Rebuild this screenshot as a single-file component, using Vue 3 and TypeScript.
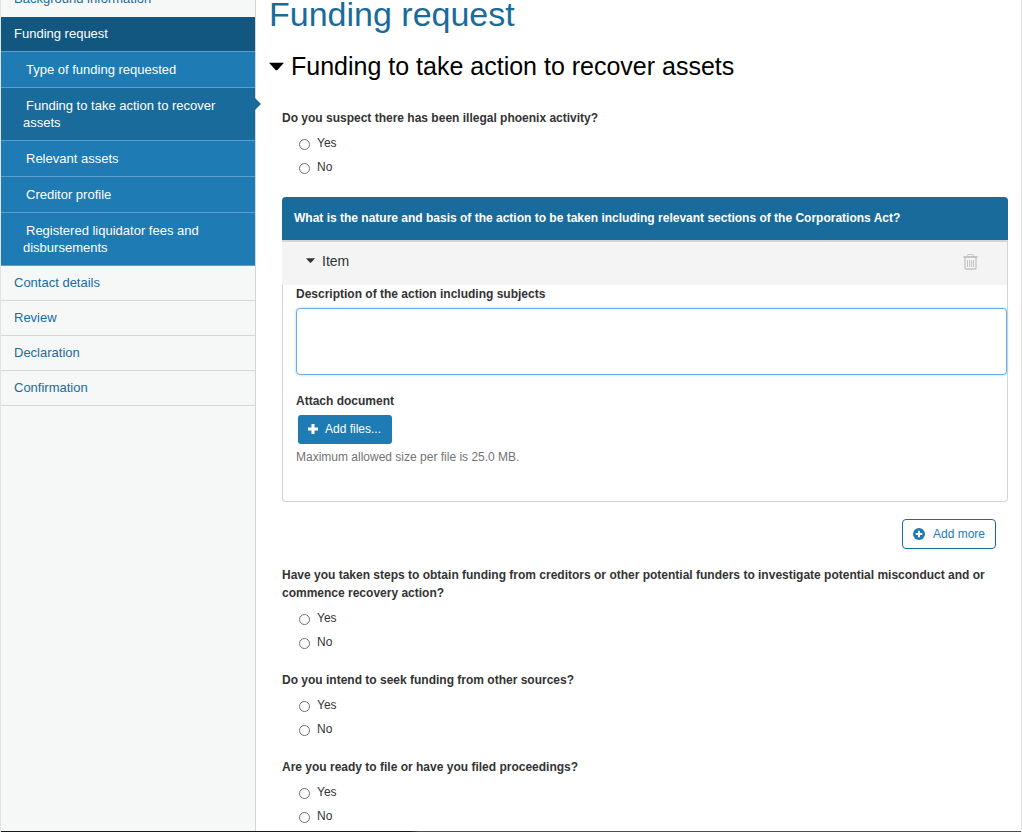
<script setup lang="ts">
import { ref } from 'vue'

interface Step {
  label: string
  kind: 'main' | 'open' | 'sub' | 'active'
}

interface Question {
  id: string
  text: string
}

const steps: Step[] = [
  { label: 'Background information', kind: 'main' },
  { label: 'Funding request', kind: 'open' },
  { label: 'Type of funding requested', kind: 'sub' },
  { label: 'Funding to take action to recover assets', kind: 'active' },
  { label: 'Relevant assets', kind: 'sub' },
  { label: 'Creditor profile', kind: 'sub' },
  { label: 'Registered liquidator fees and disbursements', kind: 'sub' },
  { label: 'Contact details', kind: 'main' },
  { label: 'Review', kind: 'main' },
  { label: 'Declaration', kind: 'main' },
  { label: 'Confirmation', kind: 'main' },
]

const phoenix: Question[] = [
  { id: 'phoenix', text: 'Do you suspect there has been illegal phoenix activity?' },
]

const followUps: Question[] = [
  {
    id: 'steps',
    text: 'Have you taken steps to obtain funding from creditors or other potential funders to investigate potential misconduct and or commence recovery action?',
  },
  { id: 'sources', text: 'Do you intend to seek funding from other sources?' },
  { id: 'proceedings', text: 'Are you ready to file or have you filed proceedings?' },
]

const options = ['Yes', 'No']
const answers = ref<Record<string, string>>({})
const description = ref('')
</script>

<template>
  <div class="page">
    <nav class="sidebar">
      <a v-for="s in steps" :key="s.label" href="#" class="step" :class="s.kind">{{ s.label }}</a>
    </nav>

    <main class="content">
      <h1>Funding request</h1>
      <h2>
        <svg class="caret" viewBox="0 0 16 9"><path d="M0 0.5h16L9 8.2q-1 0.8-2 0z" fill="currentColor" /></svg>
        Funding to take action to recover assets
      </h2>

      <div class="form">
        <fieldset v-for="q in phoenix" :key="q.id">
          <legend>{{ q.text }}</legend>
          <label v-for="o in options" :key="o" class="option">
            <input v-model="answers[q.id]" type="radio" :name="q.id" :value="o" />{{ o }}
          </label>
        </fieldset>

        <section class="panel">
          <h3>What is the nature and basis of the action to be taken including relevant sections of the Corporations Act?</h3>
          <div class="item-bar">
            <button type="button" class="toggle">
              <svg class="small-caret" viewBox="0 0 9 5"><path d="M0 0.3h9L5.2 4.5q-0.7 0.6-1.4 0z" fill="currentColor" /></svg>
              Item
            </button>
            <button type="button" class="trash" aria-label="Remove item">
              <svg viewBox="0 0 15 16" fill="none" stroke="currentColor">
                <path d="M0.5 3h14" stroke-width="2" />
                <path d="M4.500 2.500V1.500q0-1 1-1h4q1 0 1 1v1" />
                <path d="M2 4v10q0 1 1 1h9q1 0 1-1V4" stroke-width="1.300" />
                <path d="M4.500 6v7M6.500 6v7M8.500 6v7M10.500 6v7" />
              </svg>
            </button>
          </div>
          <div class="item-body">
            <label class="caption" for="description">Description of the action including subjects</label>
            <textarea id="description" v-model="description"></textarea>
            <div class="caption">Attach document</div>
            <button type="button" class="add-files">
              <svg class="plus" viewBox="0 0 10 10"><path d="M3.500 0h3v3.500h3.500v3h-3.500v3.500h-3v-3.500H0v-3h3.500z" fill="currentColor" /></svg>
              Add files...
            </button>
            <p class="help">Maximum allowed size per file is 25.0 MB.</p>
          </div>
        </section>

        <div class="more-row">
          <button type="button" class="add-more">
            <svg class="circle-plus" viewBox="0 0 12 12">
              <circle cx="6" cy="6" r="6" fill="currentColor" />
              <path d="M6 2.700v6.600M2.700 6h6.600" stroke="#fff" stroke-width="2" />
            </svg>
            Add more
          </button>
        </div>

        <fieldset v-for="q in followUps" :key="q.id">
          <legend>{{ q.text }}</legend>
          <label v-for="o in options" :key="o" class="option">
            <input v-model="answers[q.id]" type="radio" :name="q.id" :value="o" />{{ o }}
          </label>
        </fieldset>
      </div>
    </main>
    <div class="edge"></div>
  </div>
</template>

<style>
body {
  margin: 0;
  background: #fff;
}
</style>

<style scoped>
.page {
  position: relative;
  display: flex;
  box-sizing: border-box;
  height: 100vh;
  overflow: hidden;
  border-left: 1px solid #dfe4e6;
  border-right: 1px solid #e4e4e4;
  background: #fff;
  color: #333;
  font-family: "Liberation Sans", Arial, sans-serif;
  font-size: 12px;
  line-height: 18px;
}

button,
textarea {
  font: inherit;
}

.sidebar {
  flex: none;
  box-sizing: border-box;
  width: 255px;
  margin-top: -18px;
  border-right: 1px solid #d2d6d8;
  background: #f6f8f8;
  font-size: 13px;
  line-height: 17px;
}

.step {
  position: relative;
  display: block;
  padding: 8px 13px 9px;
  border-bottom: 1px solid #d5d7d8;
  color: #196b9c;
  text-decoration: none;
}

.step:first-child {
  border-color: #f6f8f8;
}

.step.open {
  background: #12577f;
  border-color: #5aa0cb;
  color: #fff;
}

.step.sub,
.step.active {
  padding: 9px 30px 9px 22px;
  border-color: #5aa0cb;
  background: #1e7bb4;
  color: #fff;
  text-indent: 3px;
}

.step.active {
  background: #196b9c;
}

.step.active::after {
  content: "";
  position: absolute;
  top: 10px;
  left: 100%;
  border: 6px solid transparent;
  border-left-color: #196b9c;
  border-right: 0;
}

.content {
  flex: 1;
  min-width: 0;
  padding: 0 13px;
}

h1 {
  margin: -7px 0 0;
  color: #196b9c;
  font-size: 34px;
  font-weight: 400;
  line-height: 42px;
}

h2 {
  display: flex;
  align-items: center;
  gap: 7px;
  margin: 15px 0 0;
  color: #000;
  font-size: 25px;
  font-weight: 400;
  line-height: 32px;
}

.caret {
  width: 15px;
  height: 9px;
}

.form {
  padding: 27px 0 0 13px;
}

fieldset {
  min-width: 0;
  margin: 0 0 17px;
  padding: 0;
  border: 0;
}

legend {
  margin-bottom: 4px;
  padding: 0;
  font-weight: 700;
}

.option {
  display: flex;
  align-items: center;
  gap: 7px;
  width: max-content;
  height: 24px;
  padding-left: 17px;
}

.option input {
  box-sizing: border-box;
  width: 11px;
  height: 11px;
  margin: 3px 0 0;
  border: 1px solid #707070;
  border-radius: 50%;
  background: #fff;
  appearance: none;
}

.option input:checked {
  background: radial-gradient(#333 3px, #fff 4px);
}

.panel {
  margin-top: 18px;
  border: 1px solid #d5d5d5;
  border-top: 0;
  border-radius: 4px;
}

h3 {
  margin: 0 -1px;
  padding: 12px;
  border-bottom: 1px solid #196b9c;
  border-radius: 4px 4px 0 0;
  background: #196b9c;
  color: #fff;
  font-size: 12px;
  line-height: 18px;
}

.item-bar {
  display: flex;
  align-items: center;
  justify-content: space-between;
  margin-left: -1px;
  padding: 0 29px 6px 24px;
  height: 37px;
  border-top: 2px solid #d5d5d5;
  background: #f4f4f4;
}

.toggle {
  display: flex;
  align-items: center;
  gap: 7px;
  padding: 0;
  border: 0;
  background: none;
  color: #333;
  font-size: 14px;
}

.small-caret {
  width: 9px;
  height: 5px;
}

.trash {
  display: flex;
  padding: 3px 0 0;
  border: 0;
  background: none;
  color: #c4c4c4;
}

.trash svg {
  width: 15px;
  height: 16px;
}

.item-body {
  padding: 0 0 35px 13px;
}

.caption {
  display: block;
  font-weight: 700;
}

textarea {
  display: block;
  box-sizing: border-box;
  width: 100%;
  height: 67px;
  margin: 5px 0 17px;
  padding: 6px;
  border: 1px solid #66afe9;
  border-radius: 4px;
  outline: 0;
  box-shadow: 0 0 3px #a9d3f3;
  resize: none;
}

.add-files {
  display: flex;
  align-items: center;
  gap: 7px;
  height: 29px;
  margin: 5px 0 4px 2px;
  padding: 0 11px 1px 10px;
  border: 0;
  border-radius: 3px;
  background: #1e7bb4;
  color: #fff;
}

.plus {
  width: 10px;
  height: 10px;
}

.help {
  margin: 0;
  color: #737373;
}

.more-row {
  display: flex;
  justify-content: flex-end;
  margin: 17px 12px 17px 0;
}

.add-more {
  display: flex;
  align-items: center;
  gap: 8px;
  height: 30px;
  padding: 0 10px;
  border: 1px solid #196b9c;
  border-radius: 4px;
  background: #fff;
  color: #1e7bb4;
}

.circle-plus {
  width: 12px;
  height: 12px;
}

.edge {
  position: absolute;
  right: 0;
  bottom: 0;
  left: 0;
  height: 1px;
  background: linear-gradient(90deg, #15191d 40%, #4a5055 41%);
}
</style>
